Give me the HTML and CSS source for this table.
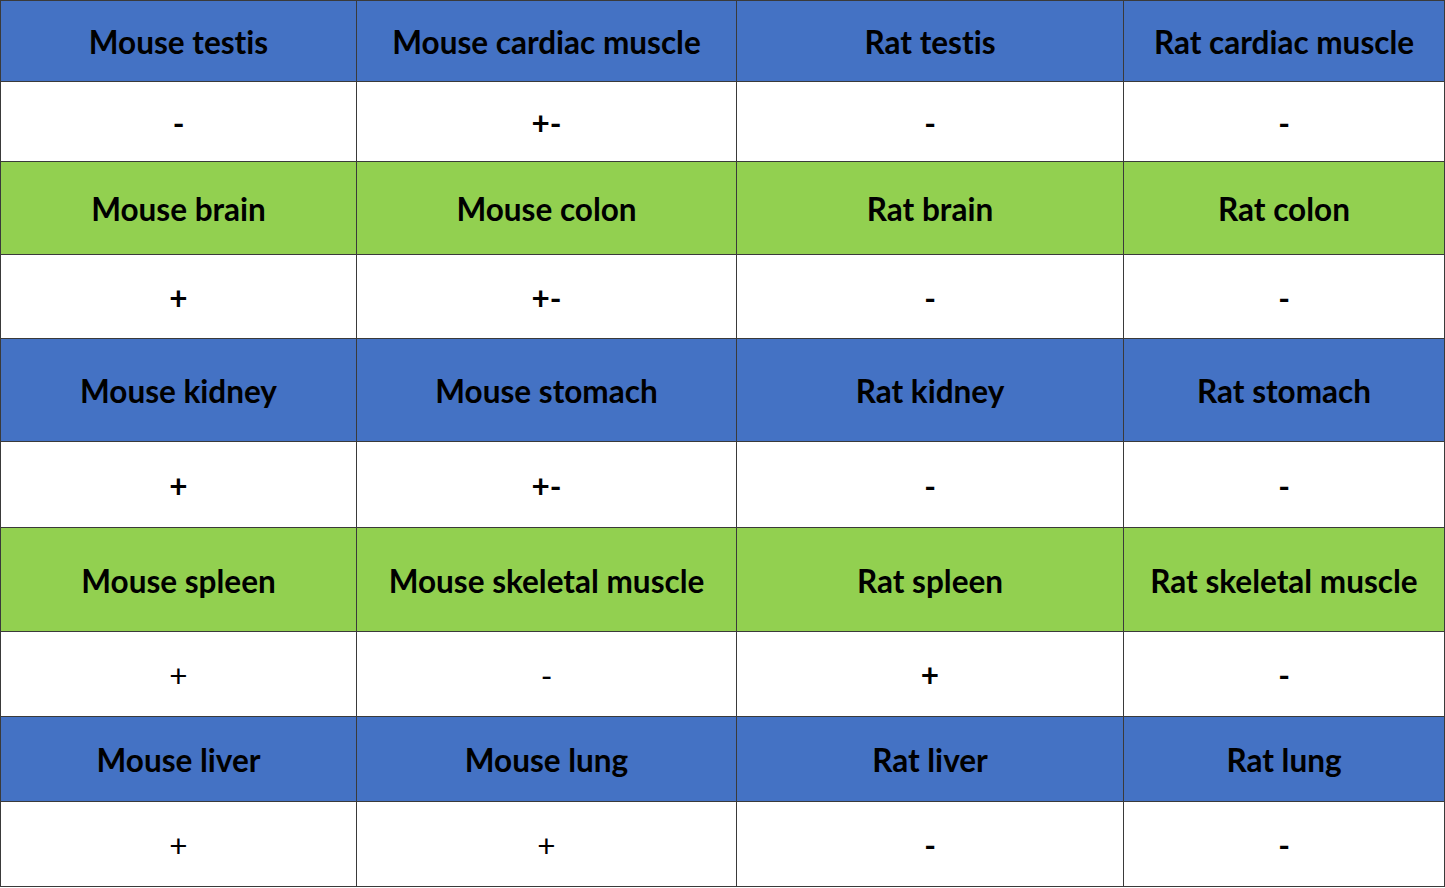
FILE: index.html
```html
<!DOCTYPE html>
<html>
<head>
<meta charset="utf-8">
<link rel="stylesheet" href="styles.css">
</head>
<body>
<table class="grid">
  <colgroup>
    <col class="c1"><col class="c2"><col class="c3"><col class="c4">
  </colgroup>
  <tr class="head blue r1"><td>Mouse testis</td><td>Mouse cardiac muscle</td><td>Rat testis</td><td>Rat cardiac muscle</td></tr>
  <tr class="val r2"><td>-</td><td>+-</td><td>-</td><td>-</td></tr>
  <tr class="head green r3"><td>Mouse brain</td><td>Mouse colon</td><td>Rat brain</td><td>Rat colon</td></tr>
  <tr class="val r4"><td>+</td><td>+-</td><td>-</td><td>-</td></tr>
  <tr class="head blue r5"><td>Mouse kidney</td><td>Mouse stomach</td><td>Rat kidney</td><td>Rat stomach</td></tr>
  <tr class="val r6"><td>+</td><td>+-</td><td>-</td><td>-</td></tr>
  <tr class="head green r7"><td>Mouse spleen</td><td>Mouse skeletal muscle</td><td>Rat spleen</td><td>Rat skeletal muscle</td></tr>
  <tr class="val r8"><td class="light">+</td><td class="light">-</td><td>+</td><td>-</td></tr>
  <tr class="head blue r9"><td>Mouse liver</td><td>Mouse lung</td><td>Rat liver</td><td>Rat lung</td></tr>
  <tr class="val r10"><td class="light">+</td><td class="light">+</td><td>-</td><td>-</td></tr>
</table>
</body>
</html>
```

FILE: styles.css
```css
html, body {
  margin: 0;
  padding: 0;
  background: #ffffff;
}
.grid {
  border-collapse: collapse;
  table-layout: fixed;
  width: 1444px;
  font-family: Lato, "Open Sans", "Liberation Sans", sans-serif;
  font-weight: 700;
  font-size: 31.5px;
  font-variant-ligatures: none;
  color: #000;
}
.c1 { width: 356px; }
.c2 { width: 380px; }
.c3 { width: 387px; }
.c4 { width: 321px; }
.grid td {
  border: 1px solid #3a3a3a;
  text-align: center;
  vertical-align: middle;
  padding: 4px 0 0 0;
  line-height: 1;
}
.blue td { background: #4472c4; }
.green td { background: #92d050; }
.val td { background: #ffffff; }
.grid td.light { font-weight: 400; }
.r1 { height: 81px; }
.r2 { height: 80px; }
.r3 { height: 93px; }
.r4 { height: 84px; }
.r5 { height: 103px; }
.r6 { height: 86px; }
.r7 { height: 104px; }
.r8 { height: 85px; }
.r9 { height: 85px; }
.r10 { height: 85px; }
```
